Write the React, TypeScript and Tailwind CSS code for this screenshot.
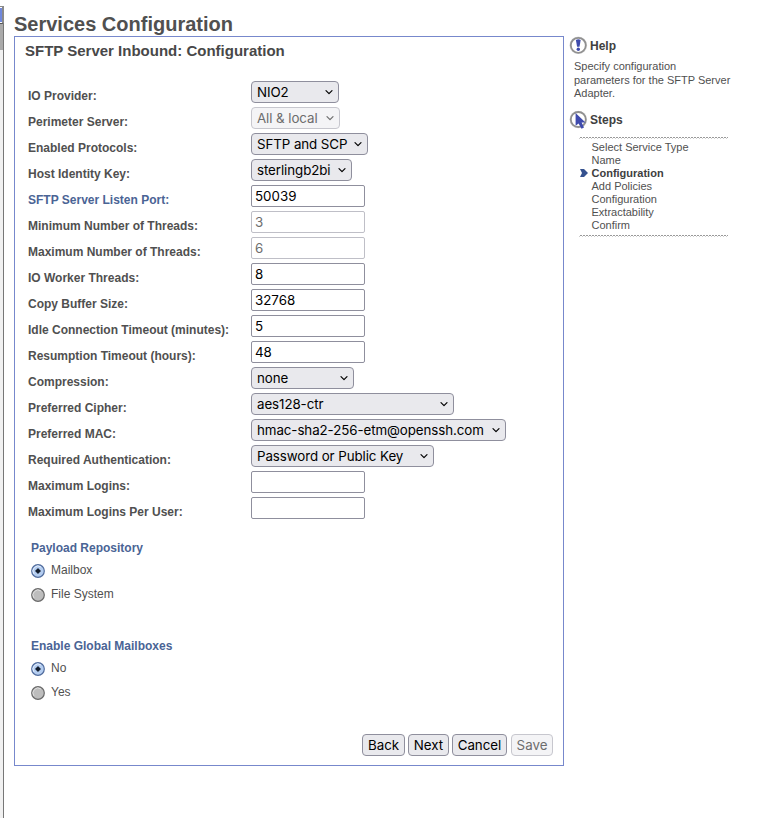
import React from "react";

type Field = {
  label: string;
  value: string;
  kind: "select" | "input";
  width: string;
  disabled?: boolean;
  accent?: boolean;
};

const fields: Field[] = [
  { label: "IO Provider:", value: "NIO2", kind: "select", width: "w-[88px]" },
  { label: "Perimeter Server:", value: "All & local", kind: "select", width: "w-[89px]", disabled: true },
  { label: "Enabled Protocols:", value: "SFTP and SCP", kind: "select", width: "w-[117px]" },
  { label: "Host Identity Key:", value: "sterlingb2bi", kind: "select", width: "w-[101px]" },
  { label: "SFTP Server Listen Port:", value: "50039", kind: "input", width: "w-[114px]", accent: true },
  { label: "Minimum Number of Threads:", value: "3", kind: "input", width: "w-[114px]", disabled: true },
  { label: "Maximum Number of Threads:", value: "6", kind: "input", width: "w-[114px]", disabled: true },
  { label: "IO Worker Threads:", value: "8", kind: "input", width: "w-[114px]" },
  { label: "Copy Buffer Size:", value: "32768", kind: "input", width: "w-[114px]" },
  { label: "Idle Connection Timeout (minutes):", value: "5", kind: "input", width: "w-[114px]" },
  { label: "Resumption Timeout (hours):", value: "48", kind: "input", width: "w-[114px]" },
  { label: "Compression:", value: "none", kind: "select", width: "w-[103px]" },
  { label: "Preferred Cipher:", value: "aes128-ctr", kind: "select", width: "w-[203px]" },
  { label: "Preferred MAC:", value: "hmac-sha2-256-etm@openssh.com", kind: "select", width: "w-[255px]" },
  { label: "Required Authentication:", value: "Password or Public Key", kind: "select", width: "w-[183px]" },
  { label: "Maximum Logins:", value: "", kind: "input", width: "w-[114px]" },
  { label: "Maximum Logins Per User:", value: "", kind: "input", width: "w-[114px]" },
];

const controlFont = "font-['Inter',sans-serif] text-[13.33px] leading-[20px]";

function Control({ field }: { field: Field }) {
  if (field.kind === "input") {
    return (
      <div
        className={`${controlFont} ${field.width} h-[22px] rounded-[2px] border bg-white pl-[3px] whitespace-nowrap ${
          field.disabled ? "border-[#bfbfc7] text-[#6d6d6d]" : "border-[#8f8f9d] text-black"
        }`}
      >
        {field.value}
      </div>
    );
  }
  return (
    <div
      className={`${controlFont} ${field.width} flex h-[22px] items-center justify-between rounded-[4px] border pr-[5px] pl-[5px] tracking-[-0.08px] whitespace-nowrap ${
        field.disabled ? "border-[#c7c7ce] bg-[#f4f4f6] text-[#6d6d6d]" : "border-[#8f8f9d] bg-[#e9e9ed] text-black"
      }`}
    >
      <span>{field.value}</span>
      <svg width="8" height="6" viewBox="0 0 8 6" fill="none" stroke="currentColor" strokeWidth="1.2" strokeLinecap="round" strokeLinejoin="round">
        <path d="M1 1.7 4 4.7 7 1.7" />
      </svg>
    </div>
  );
}

function Radio({ label, checked }: { label: string; checked?: boolean }) {
  return (
    <div className="flex h-6 items-start">
      <svg className="mt-[3px] shrink-0" width="14" height="14" viewBox="0 0 14 14">
        <circle cx="7" cy="7" r="6.3" fill={checked ? "#b4cdf0" : "#bdbdbd"} stroke={checked ? "#506b9c" : "#696969"} strokeWidth="1.2" />
        <path d="M3 10A5 5 0 0 1 10 3" fill="none" stroke={checked ? "#e3edfb" : "#dedede"} strokeWidth="1" />
        {checked && <path d="M7 4.2 9.8 7 7 9.8 4.2 7Z" fill="#111b2b" stroke="#111b2b" strokeWidth=".3" />}
      </svg>
      <span className="ml-[6px] text-[12px] leading-[18px] text-[#505050]">{label}</span>
    </div>
  );
}

function Btn({ children, width, disabled }: { children: string; width: string; disabled?: boolean }) {
  return (
    <button
      className={`${controlFont} ${width} h-[22px] rounded-[4px] border text-center ${
        disabled ? "border-[#c7c7ce] bg-[#f4f4f6] text-[#6d6d6d]" : "border-[#8f8f9d] bg-[#e9e9ed] text-black"
      }`}
    >
      {children}
    </button>
  );
}

function Dots() {
  return (
    <svg className="block" width="149" height="2" viewBox="0 0 149 2">
      <path d="M1 .5H149" stroke="#999" strokeWidth="1" strokeDasharray="2 1" />
      <path d="M0 1.5H149" stroke="#ccc" strokeWidth="1" strokeDasharray="1 2" />
    </svg>
  );
}

const steps = ["Select Service Type", "Name", "Configuration", "Add Policies", "Configuration", "Extractability", "Confirm"];

export default function App() {
  return (
    <div className="flex h-[818px] w-[772px] overflow-hidden bg-white font-['Liberation_Sans',Arial,sans-serif] text-[#505050]">
      <div className="flex w-[4px] shrink-0 flex-col pt-[6px]">
        <div className="h-[18px] border-t border-r-2 border-b border-t-[#8a8a8a] border-r-[#8a8a8a] border-b-[#555] bg-white pt-px">
          <div className="h-[14px] w-[2px] bg-[#7088dc]" />
        </div>
        <div className="h-[26px] border-r border-[#777] bg-[#aaa]" />
        <div className="flex-1 border-r border-[#777] bg-[#f1f1f1]" />
      </div>

      <main className="ml-[10px] w-[550px] shrink-0 pt-[12px]">
        <h1 className="h-6 text-[20px] leading-[24px] font-bold whitespace-nowrap">Services Configuration</h1>
        <section className="flex h-[730px] flex-col border border-[#7788cc]">
          <h2 className="mt-[5px] ml-[10px] h-[18px] text-[15px] leading-[18px] font-bold whitespace-nowrap text-[#484848]">
            SFTP Server Inbound: Configuration
          </h2>
          <div className="mt-[21px] ml-[13px]">
            {fields.map((field) => (
              <div key={field.label} className="flex h-[26px] items-start">
                <div className={`w-[223px] shrink-0 pt-[7px] text-[12px] leading-[16px] font-bold whitespace-nowrap ${field.accent ? "text-[#4a6495]" : ""}`}>
                  {field.label}
                </div>
                <Control field={field} />
              </div>
            ))}
          </div>
          <div className="mt-[17px] ml-[16px]">
            <h3 className="h-[21px] text-[12px] leading-[16px] font-bold text-[#4a6495]">Payload Repository</h3>
            <Radio label="Mailbox" checked />
            <Radio label="File System" />
          </div>
          <div className="mt-[29px] ml-[16px]">
            <h3 className="h-[21px] text-[12px] leading-[16px] font-bold text-[#4a6495]">Enable Global Mailboxes</h3>
            <Radio label="No" checked />
            <Radio label="Yes" />
          </div>
          <div className="mt-auto mb-[9px] flex pl-[347px]">
            <Btn width="w-[43px]">Back</Btn>
            <div className="w-[3px]" />
            <Btn width="w-[41px]">Next</Btn>
            <div className="w-[3px]" />
            <Btn width="w-[55px]">Cancel</Btn>
            <div className="w-[4px]" />
            <Btn width="w-[42px]" disabled>Save</Btn>
          </div>
        </section>
      </main>

      <aside className="ml-[5px] w-[190px] pt-[36px] text-[11px]">
        <div className="flex h-[20px] items-center">
          <svg className="mb-px" width="19" height="19" viewBox="0 0 19 19">
            <circle cx="9.3" cy="9.3" r="8.8" fill="#dcdcdc" />
            <circle cx="9.3" cy="9.3" r="7.5" fill="#fff" stroke="#909090" strokeWidth="1.8" />
            <path d="M6.9 4Q9.3 2.6 11.7 4L10.5 10.7H8.1Z" fill="#3f4bad" />
            <circle cx="9.3" cy="13.3" r="1.7" fill="#3f4bad" />
          </svg>
          <b className="ml-[2px] text-[12px] text-[#404040]">Help</b>
        </div>
        <p className="mt-[4px] ml-[5px] text-[11px] leading-[13.5px] whitespace-nowrap">
          Specify configuration<br />parameters for the SFTP Server<br />Adapter.
        </p>
        <div className="mt-[9px] flex h-[20px] items-center">
          <svg width="19" height="20" viewBox="0 0 19 20">
            <circle cx="9.3" cy="9.5" r="8.8" fill="#dcdcdc" />
            <circle cx="9.3" cy="9.5" r="7.5" fill="#fff" stroke="#909090" strokeWidth="1.8" />
            <path d="M6.6 3V15.8L9.6 13.4L12.5 18.8L15 17.4L12.6 12.4H16.5Z" fill="#3f4bad" />
          </svg>
          <b className="ml-[2px] text-[12px] text-[#404040]">Steps</b>
        </div>
        <div className="mt-[7px] ml-[10px]">
          <Dots />
          <ul className="pt-[2px] pb-[3px]">
            {steps.map((step, i) => (
              <li key={i} className={`flex h-[13px] items-center leading-[13px] ${i === 2 ? "font-bold text-[#404040]" : ""}`}>
                <span className="flex w-[12.5px] shrink-0 pl-[1px]">
                  {i === 2 && (
                    <svg width="9" height="8" viewBox="0 0 9 8">
                      <path d="M0 0H4L8 4 4 8H0L2 4Z" fill="#35528f" />
                    </svg>
                  )}
                </span>
                {step}
              </li>
            ))}
          </ul>
          <Dots />
        </div>
      </aside>
    </div>
  );
}
